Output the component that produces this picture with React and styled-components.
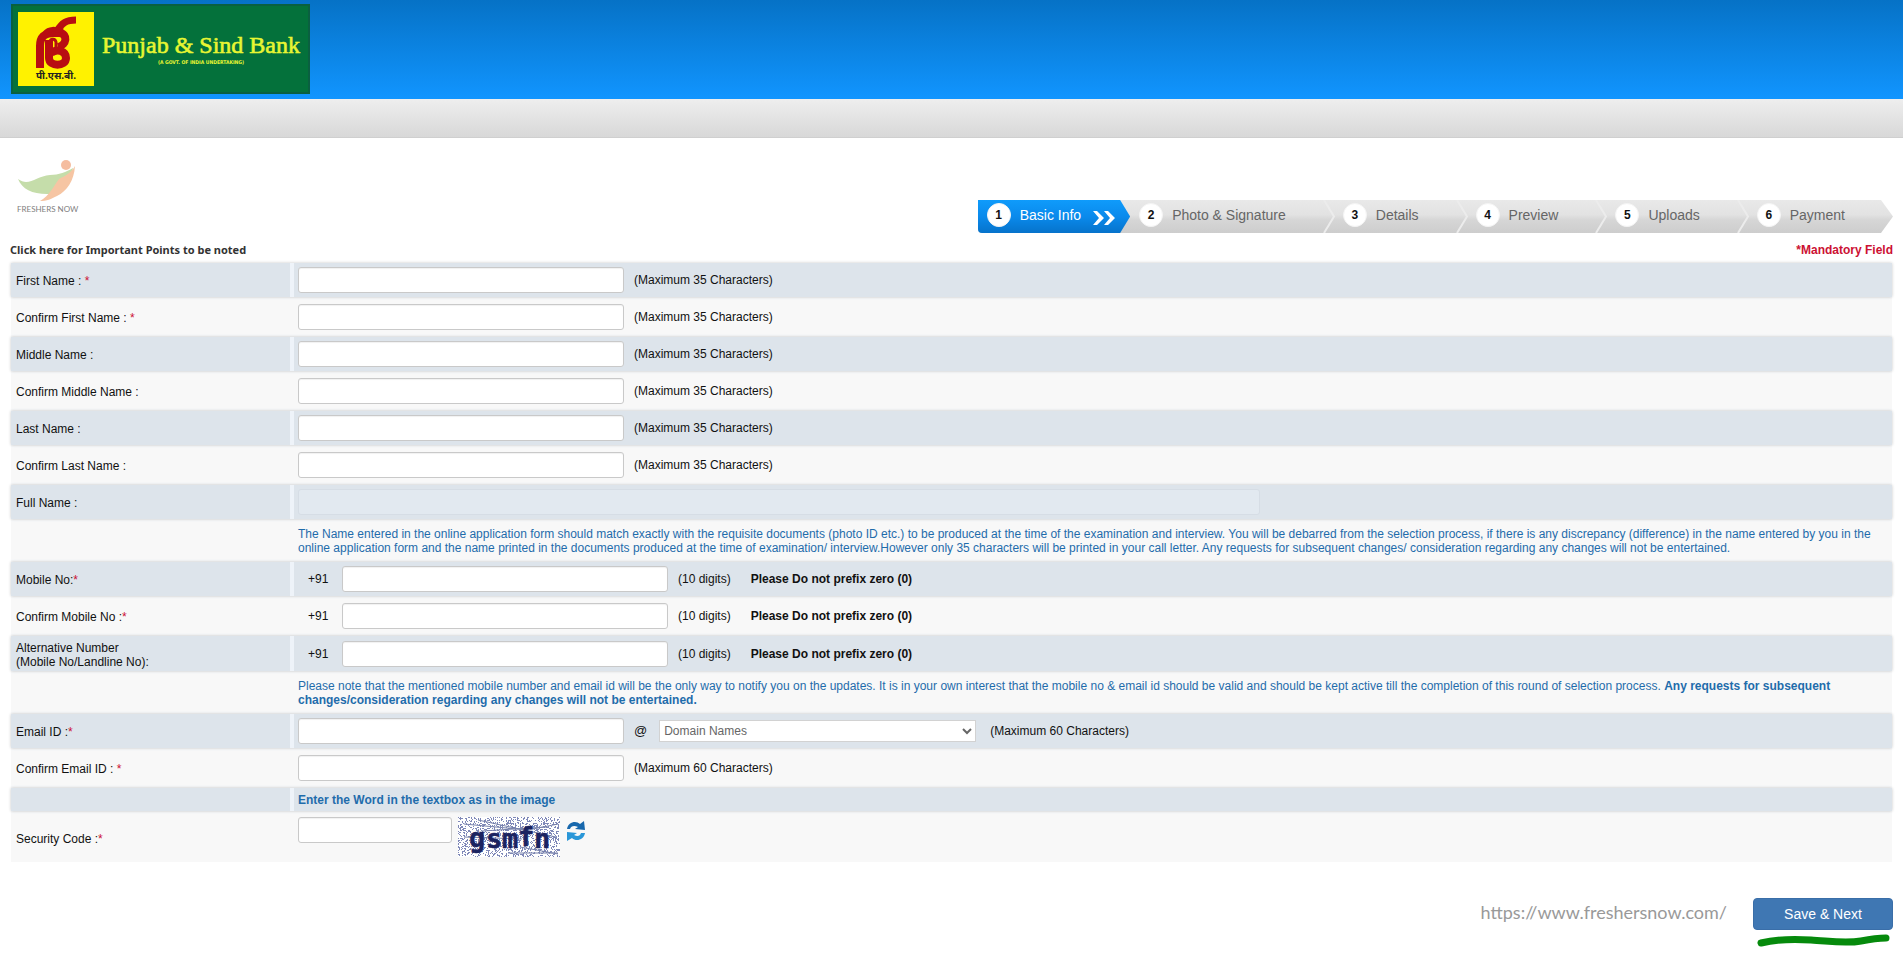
import React, { useState } from 'react';
import styled, { createGlobalStyle, css } from 'styled-components';

const GlobalStyle = createGlobalStyle`
  * {
    box-sizing: border-box;
  }

  body {
    margin: 0;
    background: #fff;
    color: #111;
    font-family: 'Liberation Sans', Arial, sans-serif;
    font-size: 12px;
    line-height: 14px;
  }

  input,
  select,
  button {
    font-family: inherit;
    font-size: 12px;
  }
`;

const Header = styled.header`
  display: flex;
  height: 99px;
  padding: 4px 11px;
  background: linear-gradient(#0672c6, #1195ff);
`;

const GreyBar = styled.div`
  height: 39px;
  background: linear-gradient(#eeeeee, #d8d8d8);
  border-bottom: 1px solid #cfcfcf;
`;

const Page = styled.main`
  padding: 0 10px;
`;

const TopRow = styled.div`
  display: flex;
  justify-content: space-between;
  align-items: flex-start;
  padding: 20px 0 10px 6px;
`;

const StepList = styled.ol`
  position: relative;
  display: flex;
  height: 33px;
  margin: 42px 0 0;
  padding: 0;
  list-style: none;
  background: linear-gradient(#e9e9e9, #e2e2e2 45%, #d6d6d6 60%, #cdcdcd);
  border-radius: 0 0 0 4px;
  clip-path: polygon(0 0, calc(100% - 12px) 0, 100% 50%, calc(100% - 12px) 100%, 0 100%);
`;

const Step = styled.li`
  position: relative;
  display: flex;
  align-items: center;
  gap: 9px;
  padding: 0 48px 4px 9px;
  color: #666;
  font-size: 14px;
  line-height: 16px;

  ${props => props.$active && css`
    padding-right: 14px;
    color: #fff;
    background: linear-gradient(#0f9bfb, #0a8aec 50%, #0673cb);
    border-radius: 0 0 0 4px;
    clip-path: polygon(0 0, calc(100% - 10px) 0, 100% 50%, calc(100% - 10px) 100%, 0 100%);
  `}
`;

const StepNumber = styled.span`
  display: flex;
  align-items: center;
  justify-content: center;
  width: 24px;
  height: 24px;
  border-radius: 50%;
  border: 1px solid #f4f4f4;
  background: #fff;
  color: #111;
  font-size: 12px;
  font-weight: 700;
`;

const StepEdge = styled.svg`
  position: absolute;
  top: 0;
  right: -3px;
`;

const DoubleArrow = styled.svg`
  margin: 7px 0 0 3px;
`;

const Notices = styled.div`
  display: flex;
  justify-content: space-between;
  align-items: flex-start;
  height: 20px;
`;

const PointsLink = styled.a`
  color: #333;
  font-family: 'Noto Sans', Tahoma, sans-serif;
  font-size: 11px;
  font-weight: 700;
  text-decoration: none;
`;

const Mandatory = styled.strong`
  color: #cc1133;
`;

const FormGrid = styled.div`
  display: flex;
  flex-direction: column;
  gap: 3px;
  margin: 0 1px;
  background: #f8f9fa;
`;

const Row = styled.div`
  display: flex;
  gap: 4px;
  min-height: ${props => props.$height || 34}px;
  background: ${props => (props.$shaded ? '#eef3f9' : '#f8f8f8')};
  box-shadow: ${props => (props.$shaded ? '0 0 3px rgba(0, 0, 0, 0.22)' : 'none')};
`;

const LabelCell = styled.div`
  display: flex;
  align-items: center;
  flex: 0 0 279px;
  padding: 2px 5px 0;
  background: ${props => (props.$shaded ? '#dde4eb' : 'transparent')};
`;

const FieldCell = styled.div`
  display: flex;
  align-items: ${props => (props.$top ? 'flex-start' : 'center')};
  flex: 1;
  min-width: 0;
  padding: ${props => (props.$top ? 3 : 0)}px 4px 0;
  background: ${props => (props.$shaded ? '#dde4eb' : 'transparent')};
`;

const Star = styled.span`
  color: #cc1133;
`;

const TextInput = styled.input`
  width: ${props => props.$width || 326}px;
  height: 26px;
  padding: 2px 6px;
  border: 1px solid #c9c9c9;
  border-radius: 3px;
  background: #fff;
  box-shadow: inset 0 1px 1px rgba(0, 0, 0, 0.06);

  &:read-only {
    border-color: #d6dde5;
    background: #e2e9f0;
    box-shadow: none;
  }
`;

const DomainSelect = styled.select`
  width: 317px;
  height: 22px;
  margin: 0 4px 0 12px;
  border: 1px solid #d2d2d2;
  background: #fff;
  color: #666;
`;

const Hint = styled.span`
  margin-left: 10px;
`;

const AtSign = styled.span`
  margin-left: 10px;
  font-size: 13px;
`;

const Prefix = styled.span`
  flex: 0 0 44px;
  padding-left: 10px;
`;

const PrefixWarning = styled.strong`
  margin-left: 20px;
`;

const Note = styled.p`
  margin: 0;
  color: #1f6cab;
`;

const WordNote = styled.strong`
  color: #1f6cab;
`;

const Captcha = styled.svg`
  margin-left: 6px;
`;

const RefreshButton = styled.button`
  display: flex;
  margin: 4px 0 0 6px;
  padding: 0;
  border: 0;
  background: none;
  cursor: pointer;
`;

const Footer = styled.footer`
  display: flex;
  justify-content: flex-end;
  align-items: flex-start;
  gap: 26px;
  padding-top: 36px;
`;

const SiteLink = styled.a`
  padding-top: 3px;
  color: #999;
  font-family: Lato, Calibri, sans-serif;
  font-size: 18px;
  line-height: 22px;
  text-decoration: none;
`;

const SaveArea = styled.div`
  display: flex;
  flex-direction: column;
`;

const SaveButton = styled.button`
  width: 140px;
  height: 32px;
  border: 1px solid #3a6ea8;
  border-radius: 4px;
  background: #3f77b3;
  color: #fff;
  font-size: 14px;
  cursor: pointer;
`;

const STEPS = ['Basic Info', 'Photo & Signature', 'Details', 'Preview', 'Uploads', 'Payment'];

const NAME_FIELDS = [
  { id: 'firstName', label: 'First Name : ', required: true },
  { id: 'confirmFirstName', label: 'Confirm First Name : ', required: true },
  { id: 'middleName', label: 'Middle Name :' },
  { id: 'confirmMiddleName', label: 'Confirm Middle Name :' },
  { id: 'lastName', label: 'Last Name :' },
  { id: 'confirmLastName', label: 'Confirm Last Name :' },
];

const PHONE_FIELDS = [
  { id: 'mobile', label: 'Mobile No:', required: true },
  { id: 'confirmMobile', label: 'Confirm Mobile No :', required: true },
  { id: 'alternative', label: <>Alternative Number<br />(Mobile No/Landline No):</>, height: 35 },
];

// Small seeded generator so the captcha noise is the same on each render
const makeNoise = count => {
  let seed = 7;
  const next = max => {
    seed = (seed * 16807) % 2147483647;
    return seed % max;
  };
  return Array.from({ length: count }, () => `M${next(102)} ${next(40)}h1v1h-1z`).join('');
};

const NOISE = makeNoise(1500);

const CAPTCHA_LETTERS = [
  { char: 'g', x: 11, y: 30 },
  { char: 's', x: 28, y: 31 },
  { char: 'm', x: 44, y: 31 },
  { char: 'f', x: 60, y: 29 },
  { char: 'n', x: 76, y: 31 },
];

const BankLogo = () => (
  <svg width="299" height="90" viewBox="0 0 299 90" role="img" aria-label="Punjab & Sind Bank">
    <rect width="299" height="90" fill="#0a6040" />
    <rect x="2" y="2" width="295" height="86" fill="#04713b" />
    <rect x="7" y="8" width="76" height="74" fill="#fff200" />
    <g fill="none" stroke="#b80d12" strokeLinecap="butt">
      <path d="M65 16C55 16 51 19 46 27" strokeWidth="7" />
      <path d="M29 64V42C29 32 35 29 43 29H49C57 30 56 41 47 43" strokeWidth="8" />
      <path d="M34 29C38 24 44 25 52 27" strokeWidth="5" />
      <path d="M38 36V54C38 63 55 63 55 54C55 47 46 44 40 49" strokeWidth="8" />
      <path d="M38 40C39 34 44 34 45 38V46" strokeWidth="3" />
    </g>
    <text x="45" y="75" textAnchor="middle" fontFamily="'Noto Sans', 'Noto Sans Devanagari', sans-serif" fontSize="10" fontWeight="700" fill="#222">पी.एस.बी.</text>
    <text x="91" y="49" fontFamily="'Liberation Serif', serif" fontSize="24" fill="#e8f632" stroke="#e8f632" strokeWidth="0.6">Punjab &amp; Sind Bank</text>
    <text x="190" y="60" textAnchor="middle" fontFamily="'DejaVu Sans Condensed', 'DejaVu Sans', sans-serif" fontSize="5" fontWeight="700" fill="#e8f632">(A GOVT. OF INDIA UNDERTAKING)</text>
  </svg>
);

const FreshersLogo = () => (
  <svg width="66" height="58" viewBox="0 0 66 58" role="img" aria-label="Freshers Now">
    <path d="M2 21C13 29 20 18 34 17C43 17 50 14 57 10C54 26 45 36 31 36C16 36 6 31 2 21z" fill="#c5ddaa" />
    <path d="M59 8C58 23 51 33 41 38C35 41 31 43 24 43C34 37 37 29 43 21C49 18 55 15 59 8z" fill="#f6c5a3" />
    <circle cx="50" cy="7" r="5" fill="#f5bda0" />
    <text x="1" y="54" fontFamily="Lato, sans-serif" fontSize="8" fill="#808080">FRESHERS NOW</text>
  </svg>
);

const RequiredLabel = ({ id, label, required, shaded }) => (
  <LabelCell $shaded={shaded}>
    <label htmlFor={id}>
      {label}
      {required && <Star>*</Star>}
    </label>
  </LabelCell>
);

const App = () => {
  const [domain, setDomain] = useState('');

  return (
    <>
      <GlobalStyle />
      <Header>
        <BankLogo />
      </Header>
      <GreyBar />

      <Page>
        <TopRow>
          <FreshersLogo />
          <StepList>
            {STEPS.map((step, index) => (
              <Step key={step} $active={index === 0}>
                <StepNumber>{index + 1}</StepNumber>
                {step}
                {index === 0 && (
                  <DoubleArrow width="23" height="14" viewBox="0 0 23 14" aria-hidden="true">
                    <path d="M0 0H4L11 7L4 14H0L6 7z M11 0H15L22 7L15 14H11L17 7z" fill="#fff" />
                  </DoubleArrow>
                )}
                {index > 0 && index < STEPS.length - 1 && (
                  <StepEdge width="14" height="33" viewBox="0 0 14 33" aria-hidden="true">
                    <path d="M1 0L11 16.5L1 33" fill="none" stroke="#ececec" strokeWidth="2" />
                  </StepEdge>
                )}
              </Step>
            ))}
          </StepList>
        </TopRow>

        <Notices>
          <PointsLink href="#points">Click here for Important Points to be noted</PointsLink>
          <Mandatory>*Mandatory Field</Mandatory>
        </Notices>

        <form onSubmit={event => event.preventDefault()}>
          <FormGrid>
            {NAME_FIELDS.map((field, index) => {
              const shaded = index % 2 === 0;
              return (
                <Row key={field.id} $shaded={shaded}>
                  <RequiredLabel {...field} shaded={shaded} />
                  <FieldCell $shaded={shaded}>
                    <TextInput id={field.id} maxLength={35} />
                    <Hint>(Maximum 35 Characters)</Hint>
                  </FieldCell>
                </Row>
              );
            })}

            <Row $shaded>
              <RequiredLabel id="fullName" label="Full Name :" shaded />
              <FieldCell $shaded>
                <TextInput id="fullName" $width={962} readOnly />
              </FieldCell>
            </Row>

            <Row $height={37}>
              <LabelCell />
              <FieldCell>
                <Note>
                  The Name entered in the online application form should match exactly with the requisite documents (photo ID etc.) to be produced at the time of the examination and interview. You will be debarred from the selection process, if there is any discrepancy (difference) in the name entered by you in the online application form and the name printed in the documents produced at the time of examination/ interview.However only 35 characters will be printed in your call letter. Any requests for subsequent changes/ consideration regarding any changes will not be entertained.
                </Note>
              </FieldCell>
            </Row>

            {PHONE_FIELDS.map((field, index) => {
              const shaded = index % 2 === 0;
              return (
                <Row key={field.id} $shaded={shaded} $height={field.height}>
                  <RequiredLabel id={field.id} label={field.label} required={field.required} shaded={shaded} />
                  <FieldCell $shaded={shaded}>
                    <Prefix>+91</Prefix>
                    <TextInput id={field.id} type="tel" maxLength={10} />
                    <Hint>(10 digits)</Hint>
                    <PrefixWarning>Please Do not prefix zero (0)</PrefixWarning>
                  </FieldCell>
                </Row>
              );
            })}

            <Row $height={37}>
              <LabelCell />
              <FieldCell>
                <Note>
                  Please note that the mentioned mobile number and email id will be the only way to notify you on the updates. It is in your own interest that the mobile no &amp; email id should be valid and should be kept active till the completion of this round of selection process.{' '}
                  <strong>Any requests for subsequent changes/consideration regarding any changes will not be entertained.</strong>
                </Note>
              </FieldCell>
            </Row>

            <Row $shaded>
              <RequiredLabel id="email" label="Email ID :" required shaded />
              <FieldCell $shaded>
                <TextInput id="email" maxLength={60} />
                <AtSign>@</AtSign>
                <DomainSelect aria-label="Domain Names" value={domain} onChange={event => setDomain(event.target.value)}>
                  <option value="">Domain Names</option>
                </DomainSelect>
                <Hint>(Maximum 60 Characters)</Hint>
              </FieldCell>
            </Row>

            <Row>
              <RequiredLabel id="confirmEmail" label="Confirm Email ID : " required />
              <FieldCell>
                <TextInput id="confirmEmail" maxLength={60} />
                <Hint>(Maximum 60 Characters)</Hint>
              </FieldCell>
            </Row>

            <Row $shaded $height={23}>
              <LabelCell $shaded />
              <FieldCell $shaded>
                <WordNote>Enter the Word in the textbox as in the image</WordNote>
              </FieldCell>
            </Row>

            <Row $height={48}>
              <RequiredLabel id="securityCode" label="Security Code :" required />
              <FieldCell $top>
                <TextInput id="securityCode" $width={154} />
                <Captcha width="102" height="40" viewBox="0 0 102 40" role="img" aria-label="Security code image">
                  <rect width="102" height="40" fill="#fff" />
                  <path d={NOISE} fill="#7f88b8" />
                  <g stroke="#7680ab" fill="none">
                    <path d="M6 7L70 13L100 7M20 3L98 20M24 14L88 10M6 20L64 22M50 36L100 36M62 30L100 37" />
                  </g>
                  <g fontFamily="'DejaVu Sans Mono', monospace" fontSize="27" fontWeight="700" fill="#1b2360" stroke="#1b2360" strokeWidth="0.5">
                    {CAPTCHA_LETTERS.map(letter => (
                      <text key={letter.char} x={letter.x} y={letter.y}>{letter.char}</text>
                    ))}
                  </g>
                </Captcha>
                <RefreshButton type="button" aria-label="Refresh code">
                  <svg width="20" height="20" viewBox="0 0 20 20" aria-hidden="true">
                    <path d="M1 8C2 1 10 -1 14 3L18 0L19 9L9 8L12 6C8 4 5 5 4 8z" fill="#1868ad" />
                    <path d="M19 12C18 19 10 21 6 17L1 20L1 11L11 12L8 14C12 16 14 15 15 12z" fill="#2a97d8" />
                  </svg>
                </RefreshButton>
              </FieldCell>
            </Row>
          </FormGrid>

          <Footer>
            <SiteLink href="#home">https://www.freshersnow.com/</SiteLink>
            <SaveArea>
              <SaveButton type="submit">Save &amp; Next</SaveButton>
              <svg width="140" height="18" viewBox="0 0 140 18" aria-hidden="true">
                <path d="M8 13C24 9 42 9 58 10C76 11 92 14 108 11C118 9 126 8 133 8" fill="none" stroke="#068a0c" strokeWidth="7" strokeLinecap="round" />
              </svg>
            </SaveArea>
          </Footer>
        </form>
      </Page>
    </>
  );
};

export default App;
